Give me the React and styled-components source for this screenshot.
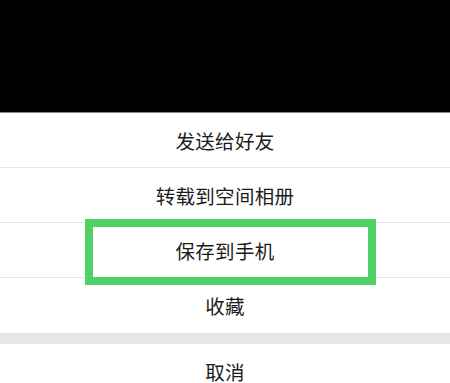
import React from 'react';
import styled, { createGlobalStyle } from 'styled-components';

const GlobalStyle = createGlobalStyle`
  html, body {
    margin: 0;
    padding: 0;
    background: #ffffff;
  }
  body {
    font-family: "Noto Sans CJK SC", "Noto Sans", sans-serif;
  }
`;

const actions = ['发送给好友', '转载到空间相册', '保存到手机', '收藏'];

const App = () => {
  return (
    <Page>
      <GlobalStyle />
      <Mask />
      <Sheet>
        {actions.map((label, i) => (
          <Row key={label} $last={i === actions.length - 1}>
            {label}
            {label === '保存到手机' && <Highlight />}
          </Row>
        ))}
        <Gap />
        <Row $last>取消</Row>
      </Sheet>
    </Page>
  );
};

const Page = styled.div`
  display: flex;
  flex-direction: column;
  width: 450px;
  height: 383px;
  overflow: hidden;
  background: #ffffff;
`;
const Mask = styled.div`
  flex: 0 0 auto;
  height: 112px;
  background: #000000;
  border-bottom: 1px solid #8a8a8a;
`;
const Sheet = styled.div`
  display: flex;
  flex-direction: column;
`;
const Row = styled.div`
  position: relative;
  display: flex;
  justify-content: center;
  align-items: center;
  height: ${(p) => (p.$last ? '55px' : '54px')};
  border-bottom: ${(p) => (p.$last ? 'none' : '1px solid #e6e6e6')};
  font-size: 19.5px;
  color: #1c1c1c;
  letter-spacing: 0.3px;
`;
const Highlight = styled.div`
  position: absolute;
  top: -4px;
  left: 85px;
  width: 291px;
  height: 66px;
  box-sizing: border-box;
  border: 8px solid #4fd165;
`;
const Gap = styled.div`
  height: 11px;
  background: #e6e6e6;
`;

export default App;
